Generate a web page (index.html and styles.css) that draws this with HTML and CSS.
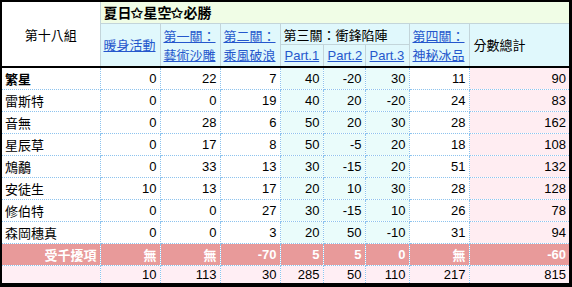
FILE: index.html
```html
<!DOCTYPE html>
<html lang="zh-Hant">
<head>
<meta charset="utf-8">
<title>第十八組</title>
<link rel="stylesheet" href="styles.css">
</head>
<body>
<table class="score">
  <colgroup>
    <col class="c-name"><col class="c-w"><col class="c-w"><col class="c-w">
    <col class="c-p1"><col class="c-p2"><col class="c-p3"><col class="c-w"><col class="c-total">
  </colgroup>
  <thead>
    <tr class="h1">
      <th rowspan="3" class="team">第十八組</th>
      <th colspan="8" class="title">夏日✩星空✩必勝</th>
    </tr>
    <tr class="h2">
      <td rowspan="2" class="hd"><a href="#">暖身活動</a></td>
      <td rowspan="2" class="hd two"><a href="#">第一關：</a><br><a href="#">藝術沙雕</a></td>
      <td rowspan="2" class="hd two"><a href="#">第二關：</a><br><a href="#">乘風破浪</a></td>
      <td colspan="3" class="hd stage3">第三關：衝鋒陷陣</td>
      <td rowspan="2" class="hd two"><a href="#">第四關：</a><br><a href="#">神秘冰品</a></td>
      <td rowspan="2" class="hd sum">分數總計</td>
    </tr>
    <tr class="h3">
      <td class="hd part"><a href="#">Part.1</a></td>
      <td class="hd part"><a href="#">Part.2</a></td>
      <td class="hd part"><a href="#">Part.3</a></td>
    </tr>
  </thead>
  <tbody>
    <tr class="row first">
      <td class="name bold">繁星</td><td>0</td><td>22</td><td>7</td><td class="p">40</td><td class="p">-20</td><td class="p">30</td><td>11</td><td class="t">90</td>
    </tr>
    <tr class="row">
      <td class="name">雷斯特</td><td>0</td><td>0</td><td>19</td><td class="p">40</td><td class="p">20</td><td class="p">-20</td><td>24</td><td class="t">83</td>
    </tr>
    <tr class="row">
      <td class="name">音無</td><td>0</td><td>28</td><td>6</td><td class="p">50</td><td class="p">20</td><td class="p">30</td><td>28</td><td class="t">162</td>
    </tr>
    <tr class="row">
      <td class="name">星辰草</td><td>0</td><td>17</td><td>8</td><td class="p">50</td><td class="p">-5</td><td class="p">20</td><td>18</td><td class="t">108</td>
    </tr>
    <tr class="row">
      <td class="name">鴆鷸</td><td>0</td><td>33</td><td>13</td><td class="p">30</td><td class="p">-15</td><td class="p">20</td><td>51</td><td class="t">132</td>
    </tr>
    <tr class="row">
      <td class="name">安徒生</td><td>10</td><td>13</td><td>17</td><td class="p">20</td><td class="p">10</td><td class="p">30</td><td>28</td><td class="t">128</td>
    </tr>
    <tr class="row">
      <td class="name">修伯特</td><td>0</td><td>0</td><td>27</td><td class="p">30</td><td class="p">-15</td><td class="p">10</td><td>26</td><td class="t">78</td>
    </tr>
    <tr class="row">
      <td class="name">森岡穗真</td><td>0</td><td>0</td><td>3</td><td class="p">20</td><td class="p">50</td><td class="p">-10</td><td>31</td><td class="t">94</td>
    </tr>
    <tr class="row penalty">
      <td class="name">受千擾項</td><td>無</td><td>無</td><td>-70</td><td>5</td><td>5</td><td>0</td><td>無</td><td>-60</td>
    </tr>
    <tr class="row totals">
      <td class="name"></td><td>10</td><td>113</td><td>30</td><td>285</td><td>50</td><td>110</td><td>217</td><td>815</td>
    </tr>
  </tbody>
</table>
</body>
</html>
```
FILE: styles.css
```css
html, body {
  margin: 0;
  background: #000;
}
body {
  width: 572px;
  height: 287px;
  overflow: hidden;
  font-family: "Liberation Sans", Arial, "Noto Sans CJK TC", sans-serif;
  font-size: 13px;
  color: #000;
}
.score {
  border-collapse: collapse;
  border-style: hidden;
  table-layout: fixed;
  width: 567px;
  margin: 2px 0 0 2px;
  background: #fff;
}
.c-name { width: 98px; }
.c-w { width: 60px; }
.c-p1 { width: 43px; }
.c-p2 { width: 42px; }
.c-p3 { width: 44px; }
.c-total { width: 100px; }

.score th, .score td {
  padding: 0 3px;
  white-space: nowrap;
  overflow: hidden;
}
thead th, thead td {
  border: 1px solid #c3d5da;
}
.team {
  background: #fff;
  font-weight: normal;
  font-family: "Noto Sans CJK TC", sans-serif;
  font-size: 13px;
  text-align: center;
}
.title {
  background: #f0fde6;
  text-align: left;
  font-family: "Noto Sans CJK TC", sans-serif;
  font-size: 14px;
  font-weight: bold;
}
.h1 { height: 21px; }
.h2 { height: 19px; }
.h3 { height: 23px; }
.hd {
  background: #e0f8fc;
  text-align: left;
  vertical-align: middle;
  font-family: "Noto Sans CJK TC", sans-serif;
}
.hd.two { line-height: 19px; }
.hd.part { font-family: "Liberation Sans", Arial, sans-serif; padding-left: 4px; }
.hd.stage3 { padding-top: 1px; }
.hd.sum { padding-left: 4px; }
.hd a {
  color: #2557cc;
  text-decoration: underline;
}

tbody td {
  border: 1px dotted #8dc3ee;
  text-align: right;
  padding: 0 3px 0 3px;
}
.row { height: 22px; }
.row.first td { border-top: 2px solid #000; }
.name {
  text-align: left !important;
  font-family: "Noto Sans CJK TC", sans-serif;
}
.bold { font-weight: bold; }
td.p { background: #eafcfb; }
td.t { background: #ffedf2; }
.penalty td {
  background: #e89a9a;
  color: #fff;
  font-weight: bold;
  font-family: "Liberation Sans", Arial, "Noto Sans CJK TC", sans-serif;
}
.penalty .name { text-align: right !important; }
.totals { height: 18px; }
.totals td { background: #ffeef4; }
```
